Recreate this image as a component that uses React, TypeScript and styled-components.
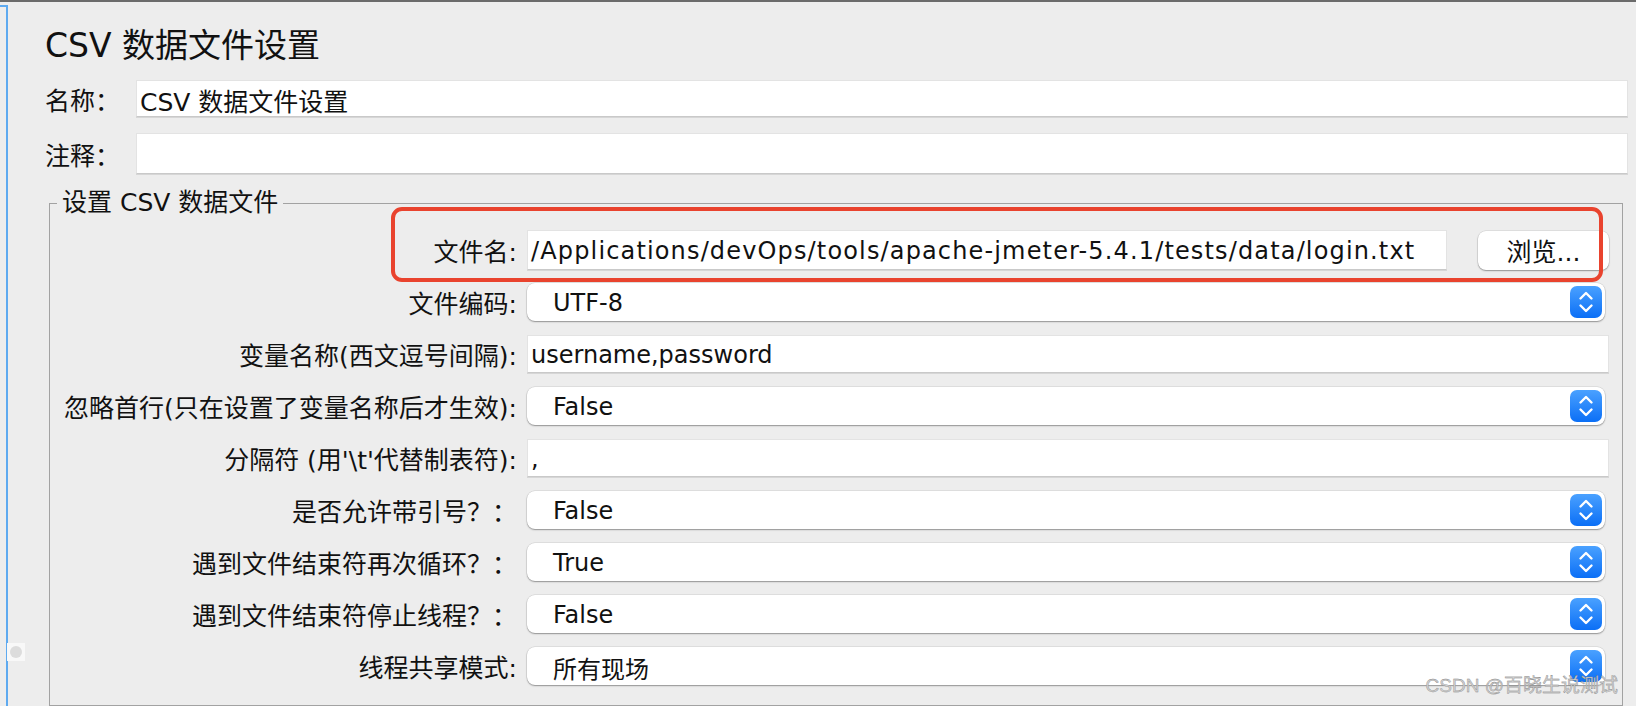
import React from "react";
import styled, { createGlobalStyle } from "styled-components";

const Global = createGlobalStyle`
  html, body { margin: 0; padding: 0; background: #ededed; }
  * { box-sizing: border-box; }
`;

const Screen = styled.div`
  position: relative;
  width: 1636px;
  height: 706px;
  overflow: hidden;
  background: #ededed;
  border-top: 2px solid #6b6b6b;
  display: flex;
  font-family: "DejaVu Sans", "Noto Sans CJK SC", sans-serif;
  color: #111;
`;

const Rail = styled.div`
  flex: none;
  margin-top: 3px;
  width: 8px;
  border-top: 2px solid #5eaaf0;
  border-right: 2px solid #5eaaf0;
`;

const Main = styled.div`
  flex: 1;
  display: flex;
  flex-direction: column;
  padding: 0 8px 0 37px;
`;

const Title = styled.h1`
  margin: 24px 0 0 0;
  font-size: 33px;
  line-height: 40px;
  font-weight: normal;
`;

const TopRow = styled.div<{ $h: number; $mt: number }>`
  display: grid;
  grid-template-columns: 91px 1fr;
  align-items: center;
  height: ${(p) => p.$h}px;
  margin-top: ${(p) => p.$mt}px;
`;

const Label = styled.span`
  font-size: 25px;
  white-space: nowrap;
`;

const TextField = styled.div<{ $h?: number; $size?: number }>`
  height: ${(p) => p.$h ?? 38}px;
  background: #fff;
  border: 1px solid #e3e3e3;
  border-bottom: 1px solid #c9c9c9;
  box-shadow: 0 1px 0 #d6d6d6;
  display: flex;
  align-items: center;
  padding: 2px 0 0 3px;
  font-size: ${(p) => p.$size ?? 24}px;
  white-space: nowrap;
  overflow: hidden;
`;

const Group = styled.fieldset`
  margin: 15px 5px 0 4px;
  padding: 7px 13px 6px 9px;
  border: 1px solid #a2a2a2;
  flex: 1;
  min-width: 0;
`;

const Legend = styled.legend`
  font-size: 25px;
  line-height: 28px;
  padding: 0 5px;
  margin-left: -2px;
`;

const Rows = styled.div`
  display: grid;
  grid-template-columns: 458px 1fr;
  grid-auto-rows: 52px;
  column-gap: 10px;
  align-items: center;
`;

const RowLabel = styled.span`
  font-size: 25px;
  text-align: right;
  white-space: nowrap;
`;

const FileCell = styled.div`
  display: flex;
  align-items: center;
  gap: 31px;
`;

const PathField = styled(TextField)`
  flex: 1;
  letter-spacing: 1.15px;
`;

const Button = styled.div`
  flex: none;
  width: 131px;
  height: 39px;
  background: #fff;
  border-radius: 8px;
  box-shadow: 0 1px 1.5px rgba(0, 0, 0, 0.35), 0 0 0 0.5px rgba(0, 0, 0, 0.12);
  display: flex;
  align-items: center;
  justify-content: center;
  font-size: 25px;
`;

const Combo = styled.div`
  height: 38px;
  margin-right: 4px;
  background: #fff;
  border-radius: 8px;
  box-shadow: 0 1px 1.5px rgba(0, 0, 0, 0.35), 0 0 0 0.5px rgba(0, 0, 0, 0.12);
  display: flex;
  align-items: center;
  padding: 0 3px 0 26px;
  font-size: 24px;
`;

const ComboText = styled.span`
  flex: 1;
  padding-top: 2px;
  white-space: nowrap;
`;

const Stepper = styled.div`
  width: 32px;
  height: 32px;
  border-radius: 7px;
  background: linear-gradient(#4aa1ff, #0b6ff6);
  display: flex;
  align-items: center;
  justify-content: center;
`;

const Annotation = styled.div`
  position: absolute;
  left: 391px;
  top: 205px;
  width: 1212px;
  height: 75px;
  border: 4px solid #e9432e;
  border-radius: 11px;
  pointer-events: none;
`;

const Watermark = styled.div`
  position: absolute;
  right: 18px;
  bottom: 9px;
  font-family: "Liberation Sans", "Noto Sans CJK SC", sans-serif;
  font-size: 19px;
  color: #d2d2d2;
  -webkit-text-stroke: 0.35px #7e7e7e;
  white-space: nowrap;
`;

const Handle = styled.div`
  position: absolute;
  left: 7px;
  top: 641px;
  width: 18px;
  height: 18px;
  background: #f8f8f8;
  display: flex;
  align-items: center;
  justify-content: center;
`;

const Dot = styled.div`
  width: 12px;
  height: 12px;
  border-radius: 50%;
  background: #dcdcdc;
`;

const StepIcon = () => (
  <Stepper>
    <svg width="32" height="32" viewBox="0 0 32 32" fill="none">
      <path d="M10.5 12.5 L16 7 L21.5 12.5" stroke="#fff" strokeWidth="2.4" strokeLinecap="round" strokeLinejoin="round" />
      <path d="M10.5 19.5 L16 25 L21.5 19.5" stroke="#fff" strokeWidth="2.4" strokeLinecap="round" strokeLinejoin="round" />
    </svg>
  </Stepper>
);

const Select = ({ value }: { value: string }) => (
  <Combo>
    <ComboText>{value}</ComboText>
    <StepIcon />
  </Combo>
);

type Row = { label: string; kind: "text" | "select"; value: string };

const rows: Row[] = [
  { label: "文件编码:", kind: "select", value: "UTF-8" },
  { label: "变量名称(西文逗号间隔):", kind: "text", value: "username,password" },
  { label: "忽略首行(只在设置了变量名称后才生效):", kind: "select", value: "False" },
  { label: "分隔符 (用'\\t'代替制表符):", kind: "text", value: "," },
  { label: "是否允许带引号？：", kind: "select", value: "False" },
  { label: "遇到文件结束符再次循环？：", kind: "select", value: "True" },
  { label: "遇到文件结束符停止线程？：", kind: "select", value: "False" },
  { label: "线程共享模式:", kind: "select", value: "所有现场" },
];

export default function App() {
  return (
    <>
      <Global />
      <Screen>
        <Rail />
        <Main>
          <Title>CSV 数据文件设置</Title>
          <TopRow $h={37} $mt={14}>
            <Label>名称：</Label>
            <TextField $h={37} $size={25}>CSV 数据文件设置</TextField>
          </TopRow>
          <TopRow $h={41} $mt={16}>
            <Label>注释：</Label>
            <TextField $h={41} />
          </TopRow>
          <Group>
            <Legend>设置 CSV 数据文件</Legend>
            <Rows>
              <RowLabel>文件名:</RowLabel>
              <FileCell>
                <PathField $h={40}>/Applications/devOps/tools/apache-jmeter-5.4.1/tests/data/login.txt</PathField>
                <Button>浏览...</Button>
              </FileCell>
              {rows.map((r) => (
                <React.Fragment key={r.label}>
                  <RowLabel>{r.label}</RowLabel>
                  {r.kind === "text" ? <TextField>{r.value}</TextField> : <Select value={r.value} />}
                </React.Fragment>
              ))}
            </Rows>
          </Group>
        </Main>
        <Annotation />
        <Handle>
          <Dot />
        </Handle>
        <Watermark>CSDN @百晓生说测试</Watermark>
      </Screen>
    </>
  );
}
